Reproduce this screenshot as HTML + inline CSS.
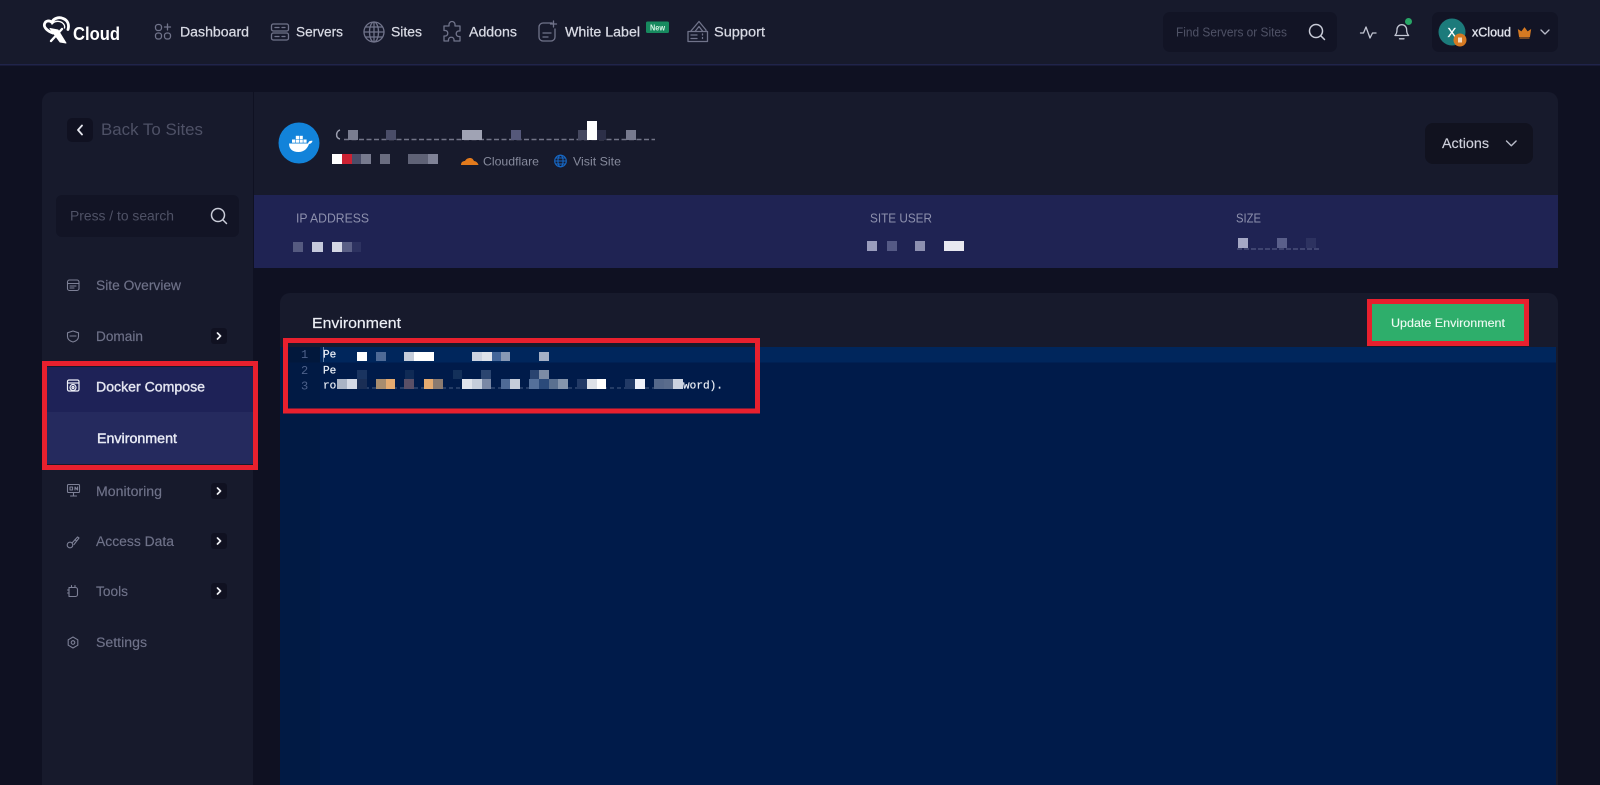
<!DOCTYPE html>
<html lang="en"><head><meta charset="utf-8"><title>xCloud - Environment</title>
<style>
html,body{margin:0;padding:0;width:1600px;height:785px;overflow:hidden;background:#0f1122}
svg{display:block}
text{font-family:"Liberation Sans",sans-serif}
.m{font-family:"Liberation Mono",monospace;font-size:11.1px;stroke:#e8edf5;stroke-width:.2px}
.ln{font-family:"Liberation Mono",monospace;font-size:12px;fill:#4d618a}
.nav{font-size:13.5px;fill:#d9dbe5;stroke:#d9dbe5;stroke-width:.25px}
.side{font-size:13.5px;fill:#6f7289;stroke:#6f7289;stroke-width:.15px}
.ic{fill:none;stroke:#70738a;stroke-width:1.3;stroke-linecap:round;stroke-linejoin:round}
.si{fill:none;stroke:#7d8096;stroke-width:1.1;stroke-linecap:round;stroke-linejoin:round}
.w{fill:none;stroke:#fff;stroke-linecap:round;stroke-linejoin:round}
.lab{font-size:13px;fill:#8d90ad}
</style></head><body>
<svg width="1600" height="785" viewBox="0 0 1600 785" xmlns="http://www.w3.org/2000/svg">
<rect width="1600" height="785" fill="#0f1122"/>
<!-- top bar -->
<rect width="1600" height="64" fill="#171a2c"/>
<rect y="64" width="1600" height="1.5" fill="#20244a"/>
<!-- logo -->
<g class="w">
<path d="M53 33 C47 31 43.500 27 44.500 24 C45.500 20.500 49.500 20 52 22.500 C53 18.500 59 16.500 63 18.500 C67.500 20 69.500 24.500 68 29.500" stroke-width="2.800"/>
<path d="M52 24 C54 21 59 20.500 62 22.500 C64 24 65 26 64.500 28" stroke-width="1.400"/>
<path d="M50 28.500 L58 30 L66 43 L60 42 Z" fill="#fff" stroke-width="1"/>
<path d="M62 29 L51 41" stroke-width="2.400"/>
</g>
<text x="73" y="40" font-size="18" font-weight="700" fill="#fff" textLength="47" lengthAdjust="spacingAndGlyphs">Cloud</text>
<!-- nav icons -->
<g class="ic">
<rect x="155.500" y="24.500" width="6" height="6" rx="2.500"/><rect x="155.500" y="33" width="6" height="6" rx="2.500"/><rect x="164.500" y="33" width="6" height="6" rx="2.500"/><path d="M167.500 24v6M164.500 27h6"/>
<rect x="271.500" y="24" width="17" height="7" rx="1.800"/><rect x="271.500" y="33" width="17" height="7" rx="1.800"/><path d="M275 27.500h4M275 36.500h4M282 27.500h3M282 36.500h3"/>
<circle cx="374" cy="32" r="10"/><ellipse cx="374" cy="32" rx="4.500" ry="10"/><path d="M374 22v20M364 32h20M365.500 27h17M365.500 37h17"/>
<path d="M449 26v-1.500a3 3 0 0 1 6 0V26h5v5h-1.500a2.800 2.800 0 0 0 0 5.500H460v4.500h-6v-1.500a2.800 2.800 0 0 0-5.500 0V41H444v-5h1.500a2.800 2.800 0 0 0 0-5.500H444V26z"/>
<path d="M552 23h-9a4 4 0 0 0-4 4v10a4 4 0 0 0 4 4h8a4 4 0 0 0 4-4V29M553.500 21v6M550.500 24h6M543 33h8M543 37h5"/>
<path d="M688 31.500h19.500v10H688zM690.500 31.500l8.500-10 7 8.500v1.500M695 31.500l4-5 3.500 4.500M691 35h6M691 38.500h6M702.500 34v1M702.500 37.500v1"/>
</g>
<g class="nav">
<text x="180" y="36.500" textLength="69" lengthAdjust="spacingAndGlyphs">Dashboard</text>
<text x="296" y="36.500" textLength="47" lengthAdjust="spacingAndGlyphs">Servers</text>
<text x="391" y="36.500" textLength="31" lengthAdjust="spacingAndGlyphs">Sites</text>
<text x="469" y="36.500" textLength="48" lengthAdjust="spacingAndGlyphs">Addons</text>
<text x="565" y="36.500" textLength="75" lengthAdjust="spacingAndGlyphs">White Label</text>
<text x="714" y="36.500" textLength="51" lengthAdjust="spacingAndGlyphs">Support</text>
</g>
<rect x="646" y="21.500" width="23" height="11.500" rx="1.500" fill="#178a5f"/>
<text x="650" y="30.500" font-size="8.500" font-weight="700" fill="#d6f5e6" textLength="15" lengthAdjust="spacingAndGlyphs">New</text>
<!-- right header -->
<rect x="1163" y="12" width="174" height="40" rx="7" fill="#121425"/>
<text x="1176" y="36.500" font-size="12.500" fill="#4f5266" textLength="111" lengthAdjust="spacingAndGlyphs">Find Servers or Sites</text>
<g fill="none" stroke="#c9ccd8" stroke-width="1.500" stroke-linecap="round"><circle cx="1316" cy="31" r="6.500"/><path d="M1321 36l3.500 3.500"/></g>
<path d="M1360.500 33h3l2.500-6 4 11 2.500-5h3.500" fill="none" stroke="#c3c6d3" stroke-width="1.300" stroke-linejoin="round" stroke-linecap="round"/>
<path d="M1395 35.500c1.500-1.500 2-3 2-6a4.800 4.800 0 0 1 9.600 0c0 3 .5 4.500 2 6zM1399.500 38.800h4.500" fill="none" stroke="#c3c6d3" stroke-width="1.300" stroke-linejoin="round" stroke-linecap="round"/>
<circle cx="1408.500" cy="21.500" r="3.500" fill="#28a667"/>
<rect x="1432" y="12" width="126" height="40" rx="7" fill="#121425"/>
<circle cx="1452" cy="32" r="13.500" fill="#1c7b7b"/>
<text x="1447.500" y="37" font-size="13" fill="#fff" stroke="#fff" stroke-width=".3">X</text>
<circle cx="1460" cy="40" r="6.500" fill="#d67a22"/>
<rect x="1458" y="37.500" width="4" height="5" fill="#f3dcc0"/>
<text x="1472" y="36.500" font-size="12.500" fill="#dfe1ea" stroke="#dfe1ea" stroke-width=".35" textLength="39" lengthAdjust="spacingAndGlyphs">xCloud</text>
<path d="M1518.500 30l3 2 3-4 3 4 3-2-1 6.500h-10zM1519.500 38h10" fill="#d67a22" stroke="#d67a22" stroke-width="1"/>
<path d="M1541 30l4 4 4-4" fill="none" stroke="#b9bcc9" stroke-width="1.300" stroke-linecap="round" stroke-linejoin="round"/>

<!-- sidebar -->
<path d="M42 102a10 10 0 0 1 10-10h201v693H42z" fill="#171a2c"/>
<rect x="67" y="118" width="26" height="24" rx="5" fill="#101121"/>
<path d="M82 125.500l-4 4.500 4 4.500" fill="none" stroke="#e5e6ee" stroke-width="1.800" stroke-linecap="round" stroke-linejoin="round"/>
<text x="101" y="135" font-size="17" fill="#4e5166" textLength="102" lengthAdjust="spacingAndGlyphs">Back To Sites</text>
<rect x="56" y="195" width="183" height="42" rx="6" fill="#121425"/>
<text x="70" y="220.500" font-size="13.500" fill="#4f5266" textLength="104" lengthAdjust="spacingAndGlyphs">Press / to search</text>
<g fill="none" stroke="#c9ccd8" stroke-width="1.500" stroke-linecap="round"><circle cx="218" cy="215" r="6.500"/><path d="M223 220l3.500 3.500"/></g>

<rect x="47" y="367" width="206" height="46" fill="#1e2257"/>
<rect x="47" y="412" width="206" height="52" fill="#252a5e"/>

<g class="si">
<rect x="67.500" y="280" width="11.500" height="10.500" rx="2"/><path d="M67.500 283.500h11.500M70 286h6M70 288h4"/>
<path d="M73 331l5.500 1.800v3.700c0 3-2.500 4.700-5.500 5.500-3-.8-5.500-2.500-5.500-5.500v-3.700zM70 336h6"/>
<rect x="67.500" y="484.500" width="12" height="8" rx="1"/><path d="M70.500 496h6M73.500 492.500V496M70 487h2.500v3H70zM75 490v-3l2.500 3v-3"/>
<circle cx="70" cy="545" r="2.800"/><path d="M72 543l5.500-6 1.500 1-5 6.500M75 539.500l1.500 1.500"/>
<path d="M69 587.500h6.500a2 2 0 0 1 2 2v5a2 2 0 0 1-2 2H69zM71.500 585.500v2M75 585.500v2M69 590h-1.500M69 593h-1.500"/>
<path d="M73 637l4.800 2.800v5.400L73 648l-4.800-2.800v-5.400z"/><circle cx="73" cy="642.500" r="1.800"/>
</g>
<g fill="none" stroke="#eef0f8" stroke-width="1.200">
<rect x="67.500" y="380" width="11.500" height="11" rx="1.500"/><path d="M67.500 383h11.500"/><circle cx="73" cy="387.500" r="3"/><circle cx="73" cy="387.500" r="1"/>
</g>
<g class="side">
<text x="96" y="290" textLength="85" lengthAdjust="spacingAndGlyphs">Site Overview</text>
<text x="96" y="341" textLength="47" lengthAdjust="spacingAndGlyphs">Domain</text>
<text x="96" y="496" textLength="66" lengthAdjust="spacingAndGlyphs">Monitoring</text>
<text x="96" y="546" textLength="78" lengthAdjust="spacingAndGlyphs">Access Data</text>
<text x="96" y="596" textLength="32" lengthAdjust="spacingAndGlyphs">Tools</text>
<text x="96" y="647" textLength="51" lengthAdjust="spacingAndGlyphs">Settings</text>
</g>
<text x="96" y="391.500" font-size="13.500" fill="#e3e5f0" stroke="#e3e5f0" stroke-width=".4" textLength="109" lengthAdjust="spacingAndGlyphs">Docker Compose</text>
<text x="97" y="443" font-size="13.500" fill="#e9ebf5" stroke="#e9ebf5" stroke-width=".4" textLength="80" lengthAdjust="spacingAndGlyphs">Environment</text>
<g fill="#101121">
<rect x="211" y="328" width="16" height="16" rx="3"/><rect x="211" y="483" width="16" height="16" rx="3"/><rect x="211" y="533" width="16" height="16" rx="3"/><rect x="211" y="583" width="16" height="16" rx="3"/>
</g>
<g fill="none" stroke="#f0f1f6" stroke-width="1.700" stroke-linecap="round" stroke-linejoin="round">
<path d="M217.500 333l3 3-3 3M217.500 488l3 3-3 3M217.500 538l3 3-3 3M217.500 588l3 3-3 3"/>
</g>

<!-- site header -->
<path d="M254 92h1294a10 10 0 0 1 10 10v93H254z" fill="#171a2c"/>
<circle cx="299" cy="143" r="20.500" fill="#1283da"/>
<g fill="#fff">
<path d="M289 143.500h19c.5-2 2-3 3-2.500 .5-.5 1.200-.5 1.500 0 -.5 1.800-2 2.800-3.500 3-1.500 4.500-5 8-10.500 8-6.500 0-9.500-3.500-9.500-8.500z"/>
<rect x="292" y="139.500" width="3.200" height="3.200"/><rect x="295.800" y="139.500" width="3.200" height="3.200"/><rect x="299.600" y="139.500" width="3.200" height="3.200"/><rect x="303.400" y="139.500" width="3.200" height="3.200"/><rect x="295.800" y="135.800" width="3.200" height="3.200"/><rect x="299.600" y="135.800" width="3.200" height="3.200"/>
</g>
<!-- blurred title -->
<path d="M340 130c-4 1-5 8 0 9" fill="none" stroke="#9b9eaf" stroke-width="1.500"/>
<path d="M344 139.500H655" stroke="#8f92a6" stroke-width="1.600" stroke-dasharray="5 2.500" opacity=".75"/>
<g>
<rect x="348" y="130" width="10" height="10" fill="#7a7d90"/><rect x="386" y="130" width="10" height="10" fill="#4a4d68"/><rect x="462" y="130" width="20" height="10" fill="#a0a3b4"/><rect x="511" y="130" width="10" height="10" fill="#55587a"/><rect x="578" y="130" width="10" height="10" fill="#45485f"/><rect x="587" y="121" width="10" height="19" fill="#fff"/><rect x="597" y="130" width="9" height="10" fill="#2c2f48"/><rect x="626" y="130" width="10" height="10" fill="#777a8e"/>
<rect x="332" y="154" width="10" height="10" fill="#fff"/><rect x="342" y="154" width="10" height="10" fill="#cc2233"/><rect x="352" y="154" width="9" height="10" fill="#4a4d68"/><rect x="361" y="154" width="10" height="10" fill="#777a8e"/><rect x="380" y="154" width="10" height="10" fill="#6a6d80"/><rect x="408" y="154" width="20" height="10" fill="#5f6276"/><rect x="428" y="154" width="10" height="10" fill="#7f8296"/>
</g>
<path d="M461 165c0-3 2-4 4-4 1-2 3-3 5-3 2 0 3 1 4 3 2 0 4 2 4.500 4z" fill="#e27a1c"/>
<text x="483" y="165.500" font-size="12" fill="#868a9c" textLength="56" lengthAdjust="spacingAndGlyphs">Cloudflare</text>
<g fill="none" stroke="#1667c4" stroke-width="1.100"><circle cx="560.500" cy="161" r="5.800"/><ellipse cx="560.500" cy="161" rx="2.600" ry="5.800"/><path d="M554.700 161h11.600M555.700 158h9.600M555.700 164h9.600"/></g>
<text x="573" y="165.500" font-size="12" fill="#868a9c" textLength="48" lengthAdjust="spacingAndGlyphs">Visit Site</text>
<rect x="1425" y="123" width="108" height="41" rx="8" fill="#11121f"/>
<text x="1442" y="148" font-size="13.500" fill="#cfd1dc" stroke="#cfd1dc" stroke-width=".15" textLength="47" lengthAdjust="spacingAndGlyphs">Actions</text>
<path d="M1506.500 141l4.800 4.800 4.800-4.800" fill="none" stroke="#b9bcc9" stroke-width="1.400" stroke-linecap="round" stroke-linejoin="round"/>

<!-- info band -->
<rect x="254" y="195" width="1304" height="73" fill="#1f2353"/>
<text class="lab" x="296" y="222.500" textLength="73" lengthAdjust="spacingAndGlyphs">IP ADDRESS</text>
<text class="lab" x="870" y="222.500" textLength="62" lengthAdjust="spacingAndGlyphs">SITE USER</text>
<text class="lab" x="1236" y="222.500" textLength="25" lengthAdjust="spacingAndGlyphs">SIZE</text>
<rect x="293" y="242" width="10" height="10" fill="#555a80"/><rect x="312" y="242" width="11" height="10" fill="#c5c9dc"/><rect x="332" y="242" width="10" height="10" fill="#d5d8e5"/><rect x="342" y="242" width="10" height="10" fill="#5a5f85"/><rect x="352" y="242" width="9" height="10" fill="#2d3260"/>
<rect x="867" y="241" width="10" height="10" fill="#9a9dbd"/><rect x="887" y="241" width="10" height="10" fill="#555a85"/><rect x="915" y="241" width="10" height="10" fill="#8d90b0"/><rect x="944" y="241" width="20" height="10" fill="#e8e8f0"/>
<path d="M1237 249H1320" stroke="#7e82a8" stroke-width="1.200" stroke-dasharray="5 2" opacity=".55"/>
<rect x="1238" y="238" width="10" height="10" fill="#a5a8c5"/><rect x="1277" y="238" width="10" height="10" fill="#5a5f8a"/><rect x="1306" y="238" width="10" height="10" fill="#2d3260"/>

<!-- environment panel -->
<path d="M280 303a10 10 0 0 1 10-10h1258a10 10 0 0 1 10 10v482H280z" fill="#171a2c"/>
<text x="312" y="328" font-size="15" fill="#eceef5" stroke="#eceef5" stroke-width=".2" textLength="89" lengthAdjust="spacingAndGlyphs">Environment</text>
<rect x="280" y="347" width="1276" height="438" fill="#001b4a"/>
<rect x="280" y="347" width="40" height="438" fill="#011a44"/>
<rect x="320" y="347" width="1236" height="15.500" fill="#00265c"/>
<rect x="289" y="347" width="31" height="15.500" fill="#02183c"/>
<rect x="323" y="347" width="1" height="15" fill="#6c86ad"/>
<text class="ln" x="301" y="358">1</text><text class="ln" x="301" y="374">2</text><text class="ln" x="301" y="389.500">3</text>
<g fill="#e8edf5">
<text class="m" x="323" y="357.500">Pe</text>
<text class="m" x="323" y="373.500">Pe</text>
<text class="m" x="323" y="388.500">ro</text>
<text class="m" x="683" y="388.500">word).</text>
</g>
<path d="M337 388H683" stroke="#9fb0c9" stroke-width="1" stroke-dasharray="4 3" opacity=".45"/>
<!-- blurred editor lines -->
<rect x="357" y="352" width="10" height="9" fill="#fff"/><rect x="376" y="352" width="10" height="9" fill="#4e6a96"/><rect x="404" y="352" width="10" height="9" fill="#c5cdda"/><rect x="414" y="352" width="20" height="9" fill="#fff"/><rect x="472" y="352" width="10" height="9" fill="#ccd3e0"/><rect x="482" y="352" width="10" height="9" fill="#dfe3ea"/><rect x="492" y="352" width="9" height="9" fill="#446699"/><rect x="501" y="352" width="9" height="9" fill="#8899b5"/><rect x="539" y="352" width="10" height="9" fill="#a5b0c5"/>
<rect x="357" y="370" width="10" height="9" fill="#1a3460"/><rect x="405" y="370" width="9" height="9" fill="#0f2a55"/><rect x="453" y="370" width="9" height="9" fill="#13305a"/><rect x="481" y="370" width="10" height="9" fill="#2b4570"/><rect x="530" y="370" width="9" height="9" fill="#2a4470"/><rect x="539" y="370" width="10" height="9" fill="#7d8ca5"/>
<g>
<rect x="337" y="379" width="10" height="10" fill="#aab4c5"/><rect x="347" y="379" width="10" height="10" fill="#d5dae5"/><rect x="357" y="379" width="10" height="10" fill="#1a2e55"/><rect x="376" y="379" width="10" height="10" fill="#a88d6f"/><rect x="386" y="379" width="9" height="10" fill="#e5ab70"/><rect x="404" y="379" width="10" height="10" fill="#5a4f66"/><rect x="424" y="379" width="9" height="10" fill="#e5ab70"/><rect x="433" y="379" width="10" height="10" fill="#8a7a70"/><rect x="462" y="379" width="10" height="10" fill="#dfe3ea"/><rect x="472" y="379" width="10" height="10" fill="#c5cdda"/><rect x="482" y="379" width="9" height="10" fill="#7a88a5"/><rect x="501" y="379" width="9" height="10" fill="#4e6a96"/><rect x="510" y="379" width="10" height="10" fill="#c5cdda"/><rect x="529" y="379" width="10" height="10" fill="#55709a"/><rect x="539" y="379" width="10" height="10" fill="#2b4a7a"/><rect x="549" y="379" width="9" height="10" fill="#5a7090"/><rect x="558" y="379" width="10" height="10" fill="#8595ac"/><rect x="577" y="379" width="10" height="10" fill="#223a66"/><rect x="587" y="379" width="10" height="10" fill="#dde1e8"/><rect x="597" y="379" width="9" height="10" fill="#fff"/><rect x="625" y="379" width="10" height="10" fill="#223a66"/><rect x="635" y="379" width="10" height="10" fill="#f0f2fa"/><rect x="654" y="379" width="10" height="10" fill="#55688a"/><rect x="664" y="379" width="9" height="10" fill="#5a6c8c"/><rect x="673" y="379" width="10" height="10" fill="#ccd3e0"/>
</g>
<!-- update button -->
<rect x="1372" y="304" width="152" height="37" fill="#2eae6b"/>
<text x="1391" y="327" font-size="12" fill="#eefaf3" stroke="#eefaf3" stroke-width=".12" textLength="114" lengthAdjust="spacingAndGlyphs">Update Environment</text>
<!-- annotation boxes -->
<g fill="none" stroke="#e8202e" stroke-width="5">
<rect x="44.500" y="363.500" width="211" height="104"/>
<rect x="285.500" y="340.500" width="472" height="70.500"/>
<rect x="1369.500" y="301.500" width="157" height="42"/>
</g>
</svg>
</body></html>
